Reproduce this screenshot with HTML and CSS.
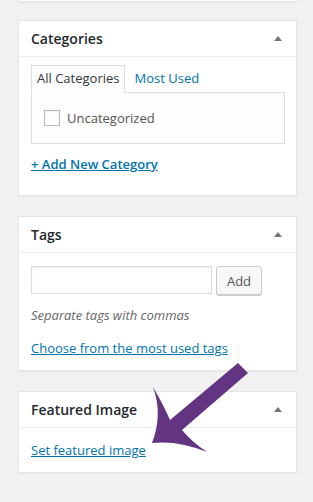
FILE: index.html
```html
<!DOCTYPE html>
<html lang="en">
<head>
  <meta charset="UTF-8" />
  <meta name="viewport" content="width=device-width, initial-scale=1.0" />
  <title>Post sidebar</title>
  <link rel="stylesheet" href="styles.css">
</head>
<body>

<div class="sidebar">
  <div class="postbox postbox-cut"></div>

  <div class="postbox">
    <div class="postbox-head">
      <h2>Categories</h2>
      <span class="toggle"></span>
    </div>
    <div class="inside inside-cats">
      <ul class="tabs">
        <li class="tab active">All Categories</li>
        <li class="tab"><a href="#">Most Used</a></li>
      </ul>
      <div class="tab-panel">
        <label class="check"><span class="checkbox"></span>Uncategorized</label>
      </div>
      <a href="#" class="add-link">+ Add New Category</a>
    </div>
  </div>

  <div class="postbox">
    <div class="postbox-head">
      <h2>Tags</h2>
      <span class="toggle"></span>
    </div>
    <div class="inside">
      <div class="tag-row">
        <input type="text" class="tag-input" />
        <button type="button" class="tag-add">Add</button>
      </div>
      <p class="howto">Separate tags with commas</p>
      <a href="#" class="plain-link">Choose from the most used tags</a>
    </div>
  </div>

  <div class="postbox">
    <div class="postbox-head">
      <h2>Featured Image</h2>
      <span class="toggle"></span>
    </div>
    <div class="inside">
      <a href="#" class="plain-link">Set featured image</a>
    </div>
  </div>
</div>

<svg class="arrow" width="313" height="502" viewBox="0 0 313 502">
  <path d="M238,363 L248,373 L182,430 Q192,442 207,452 Q178,440 152,443 Q163,414 153,387 Q164,406 170,420 Z" fill="#633482"/>
</svg>

</body>
</html>
```

FILE: styles.css
```css
body {
  margin: 0;
  background-color: #f1f1f1;
  font-family: 'Open Sans', sans-serif;
  color: #32373c;
  font-size: 13px;
  line-height: 18px;
}
.sidebar {
  padding: 0 16px 0 18px;
}
.postbox {
  background: #fff;
  border: 1px solid #e5e5e5;
  box-shadow: 0 1px 1px rgba(0,0,0,0.04);
  margin-bottom: 20px;
}
.postbox-cut {
  height: 1px;
  border-top: none;
  margin-bottom: 18px;
}
.postbox-head {
  display: flex;
  align-items: center;
  justify-content: space-between;
  height: 35px;
  padding: 0 14px 0 12px;
  border-bottom: 1px solid #eee;
}
.postbox-head h2 {
  margin: 0;
  font-size: 14px;
  font-weight: 600;
  color: #23282d;
}
.toggle {
  width: 0;
  height: 0;
  border-left: 4px solid transparent;
  border-right: 4px solid transparent;
  border-bottom: 5px solid #72777c;
}
.inside {
  padding: 13px 11px 13px 12px;
}
.inside-cats {
  padding-top: 8px;
  padding-bottom: 22px;
}
.tabs {
  display: flex;
  gap: 4px;
  margin: 0;
  padding: 0;
  list-style: none;
}
.tab {
  padding: 4px 5px 5px 5px;
}
.tab a {
  color: #0073aa;
  text-decoration: none;
}
.tab.active {
  padding-top: 3px;
  border: 1px solid #ddd;
  border-bottom-color: #fdfdfd;
  background: #fdfdfd;
  margin-bottom: -1px;
  position: relative;
}
.tab-panel {
  border: 1px solid #ddd;
  background: #fdfdfd;
  height: 50px;
  padding: 0 12px;
  display: flex;
  align-items: center;
}
.check {
  display: flex;
  align-items: center;
  gap: 7px;
  color: #555;
}
.checkbox {
  width: 14px;
  height: 14px;
  border: 1px solid #b4b9be;
  background: #fff;
  box-shadow: inset 0 1px 2px rgba(0,0,0,0.07);
}
.add-link {
  display: inline-block;
  margin-top: 11px;
  color: #0073aa;
  font-weight: 600;
}
.tag-row {
  display: flex;
  gap: 4px;
}
.tag-input {
  width: 181px;
  height: 28px;
  box-sizing: border-box;
  border: 1px solid #ddd;
  box-shadow: inset 0 1px 2px rgba(0,0,0,0.07);
  margin: 0;
}
.tag-add {
  width: 46px;
  height: 29px;
  border: 1px solid #ccc;
  border-radius: 3px;
  background: #f7f7f7;
  box-shadow: 0 1px 0 #ccc;
  color: #555;
  font-family: 'Open Sans', sans-serif;
  font-size: 13px;
  padding: 0;
}
.howto {
  margin: 11px 0 15px;
  font-style: italic;
  color: #666;
}
.plain-link {
  color: #0073aa;
}
.arrow {
  position: absolute;
  left: 0;
  top: 0;
  pointer-events: none;
}
```
